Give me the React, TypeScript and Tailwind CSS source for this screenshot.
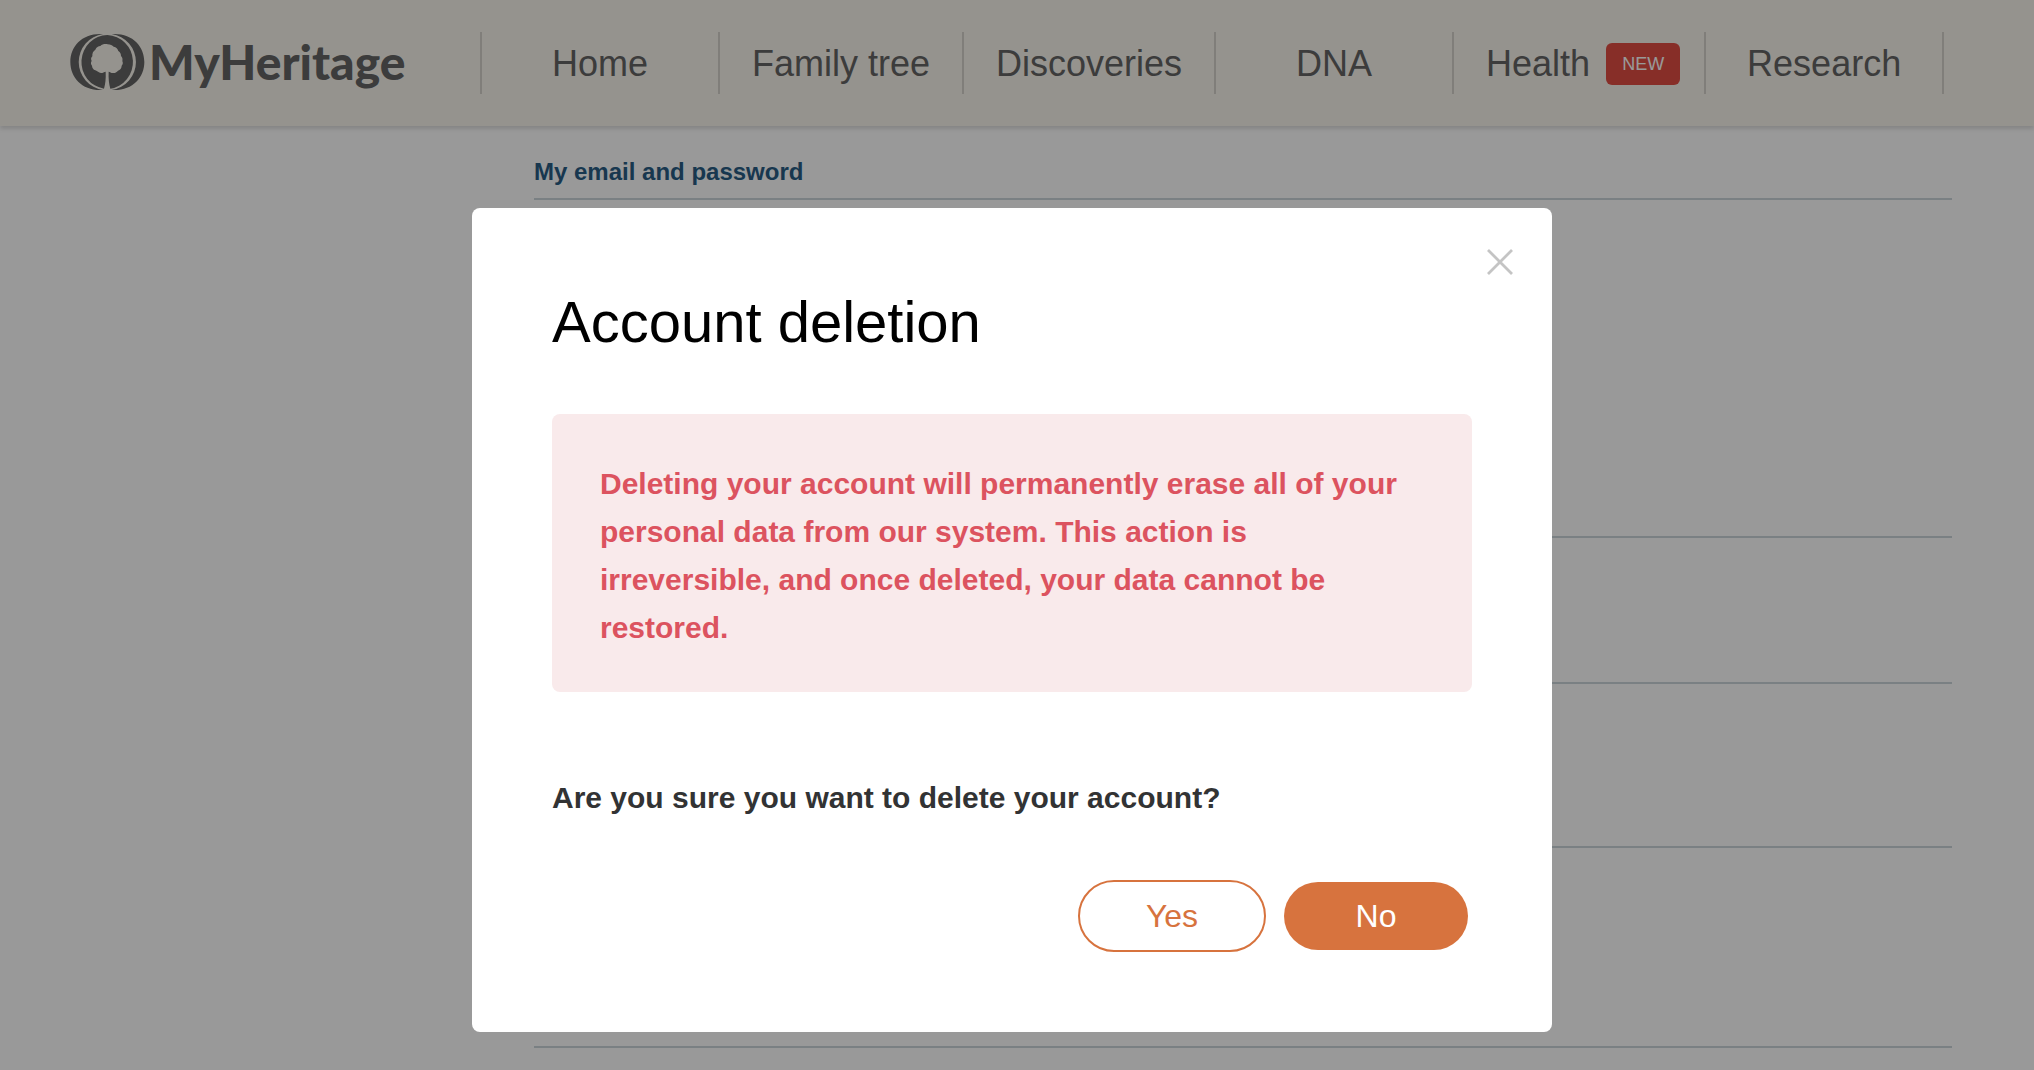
import type React from "react"

const navItems = [
  { label: "Home", isNew: false },
  { label: "Family tree", isNew: false },
  { label: "Discoveries", isNew: false },
  { label: "DNA", isNew: false },
  { label: "Health", isNew: true },
  { label: "Research", isNew: false },
]

const Logo: React.FC = () => (
  <a href="#" aria-label="MyHeritage" className="flex items-center gap-1 text-[#646464]">
    <svg viewBox="60 40 225 172" className="h-[58px] w-[75px]" aria-hidden="true">
      <path fill="currentColor" d="M159 42C98 38 61 78 61 126S98 214 159 210A86 85 0 0 1 159 42z" />
      <path fill="currentColor" d="M185 42C246 38 283 78 283 126S246 214 185 210A86 85 0 0 0 185 42z" />
      <path
        fill="currentColor"
        d="M172 45A80 81 0 0 0 162 206c4-14 6-30 5-51-5 0-8 4-14 4-8 0-10-6-17-8-6-2-10-8-10-14-4-5-4-10-1-14-3-6-2-10 2-14-1-10 3-16 9-20 3-8 9-10 15-11 6-6 15-7 22-5 8 0 14 3 18 7 8 1 12 7 14 13 6 4 8 9 8 15 5 5 5 11 4 15 3 7 1 11-2 14 0 8-5 13-11 15-5 6-10 8-16 7-5 0-8-3-12-4-1 20 1 37 5 51A80 81 0 0 0 172 45z"
      />
    </svg>
    <span className="font-['Lato',sans-serif] text-[48px] leading-[60px] font-black">MyHeritage</span>
  </a>
)

const Header: React.FC = () => (
  <header className="flex h-[126px] items-start bg-[#f8f5ed] pl-[70px] shadow-[0_3px_4px_rgba(0,0,0,0.13)]">
    <div className="w-[410px] shrink-0 pt-8">
      <Logo />
    </div>
    <nav className="mt-8 flex h-[62px] items-center border-l-2 border-[#d5d3cc]">
      {navItems.map((item) => (
        <a
          key={item.label}
          href="#"
          className="flex h-full min-w-[238px] items-center justify-center gap-4 border-r-2 border-[#d5d3cc] px-8 pt-0.5 text-4xl text-[#646464] has-[span]:pr-6"
        >
          {item.label}
          {item.isNew && (
            <span className="rounded-md bg-[#e14e44] px-4 text-lg leading-[42px] text-white">NEW</span>
          )}
        </a>
      ))}
    </nav>
  </header>
)

const Settings: React.FC = () => (
  <main className="mr-[82px] ml-[534px]">
    <h2 className="border-b-2 border-[#cbd5da] pt-[30px] pb-2.5 text-2xl leading-8 font-bold text-[#285c84]">
      My email and password
    </h2>
    <section className="h-[338px] border-b-2 border-[#cbd5da]" />
    <section className="h-[146px] border-b-2 border-[#cbd5da]" />
    <section className="h-[164px] border-b-2 border-[#cbd5da]" />
    <section className="h-[200px] border-b-2 border-[#cbd5da]" />
  </main>
)

const DeleteDialog: React.FC = () => (
  <div className="fixed inset-0 flex items-start justify-center bg-black/40 pt-52 pr-[10px]">
    <div
      role="dialog"
      aria-modal="true"
      aria-labelledby="dialog-title"
      className="relative w-full max-w-[1080px] rounded-lg bg-white px-20 pb-20"
    >
      <button type="button" aria-label="Close" className="absolute top-10 right-[38px] text-[#c4c4c4]">
        <svg viewBox="0 0 28 28" className="size-7" fill="none" stroke="currentColor" strokeWidth="2.8">
          <path d="M2 2l24 24M26 2L2 26" />
        </svg>
      </button>
      <h1 id="dialog-title" className="pt-[78px] text-[58px] leading-[72px] text-black">
        Account deletion
      </h1>
      <p className="mt-14 rounded-lg bg-[#f9eaeb] px-12 pt-[46px] pb-10 text-[30px] leading-[48px] font-bold text-[#dc535f]">
        Deleting your account will permanently erase all of your personal data from our system. This action is
        irreversible, and once deleted, your data cannot be restored.
      </p>
      <p className="mt-[82px] text-[30px] leading-[48px] font-bold text-[#323334]">
        Are you sure you want to delete your account?
      </p>
      <div className="mt-[58px] flex items-center justify-end gap-[18px] pr-1 text-[32px]">
        <button type="button" className="h-[72px] w-[188px] rounded-full border-2 border-[#d7733e] text-[#d7733e]">
          Yes
        </button>
        <button type="button" className="h-[68px] w-[184px] rounded-full bg-[#d7733e] text-white">
          No
        </button>
      </div>
    </div>
  </div>
)

export default function App() {
  return (
    <div className="min-h-screen bg-white font-['Liberation_Sans',Arial,sans-serif]">
      <Header />
      <Settings />
      <DeleteDialog />
    </div>
  )
}
